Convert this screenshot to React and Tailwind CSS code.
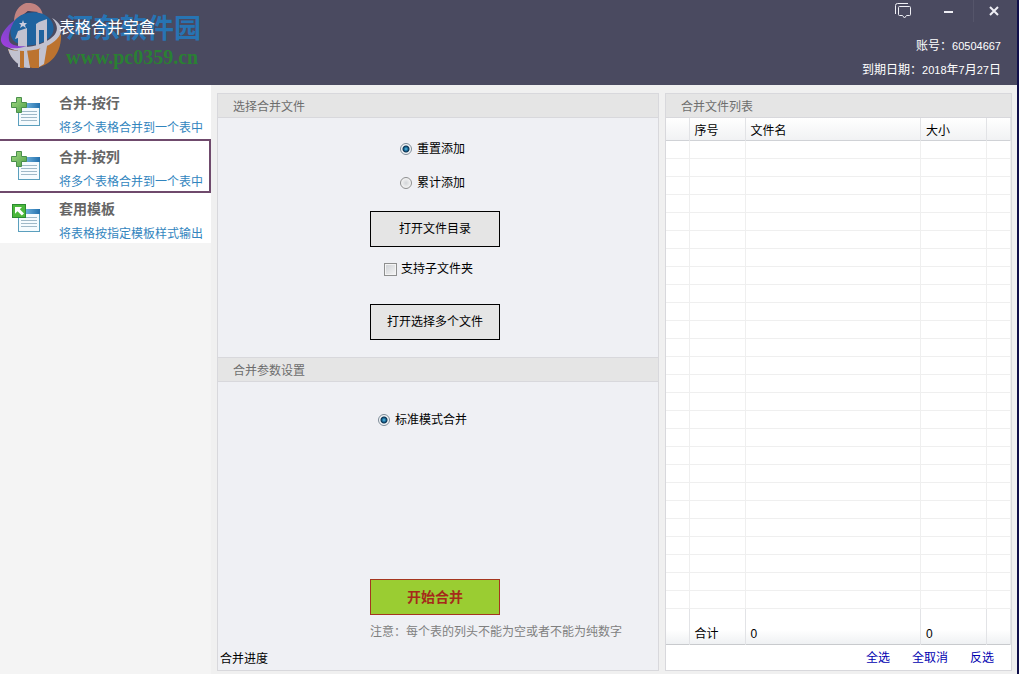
import { useState } from "react";
import { clsx } from "clsx";

const menuItems = [
  { id: "row", title: "合并-按行", description: "将多个表格合并到一个表中", icon: "plus" },
  { id: "column", title: "合并-按列", description: "将多个表格合并到一个表中", icon: "plus" },
  { id: "template", title: "套用模板", description: "将表格按指定模板样式输出", icon: "arrow" },
];

const emptyRows = Array.from({ length: 26 }, (_, index) => index);

const radioClass =
  "h-3 w-3 shrink-0 appearance-none rounded-full border border-[#8e8f8f] bg-[radial-gradient(circle,#d2d5d8_0,#f4f4f4_5px)] checked:border-[#7d8c98] checked:bg-[radial-gradient(circle_at_5px_5px,#5cc3e8_0,#14608f_2px,#0d3350_3px,#f4f6f8_4px)]";

function SheetIcon({ type }) {
  return (
    <svg className="h-[30px] w-[30px] shrink-0" viewBox="0 0 30 30" aria-hidden="true">
      <defs>
        <linearGradient id="sheet-bar" x1="0" x2="1">
          <stop offset="0" stopColor="#8fcdf0" />
          <stop offset="1" stopColor="#2370ad" />
        </linearGradient>
        <linearGradient id="sheet-green" x1="0" y1="0" x2="1" y2="1">
          <stop offset="0" stopColor="#a5dc82" />
          <stop offset="1" stopColor="#4f9f4a" />
        </linearGradient>
      </defs>
      <rect x="7.5" y="6.500" width="21" height="22" fill="#f5fbfe" stroke="#5b9fbd" />
      <rect x="8" y="6" width="21" height="5" fill="url(#sheet-bar)" />
      <path d="M10 14.500h16M10 17.500h16M10 20.500h16M10 23.500h16" stroke="#9fb9c8" />
      {type === "plus" ? (
        <path
          d="M5.500.500h5v5h5v5h-5v5h-5v-5h-5v-5h5z"
          fill="url(#sheet-green)"
          stroke="#4a8f4c"
        />
      ) : (
        <>
          <rect x="1.500" y="1.500" width="13" height="13" fill="#4bb83c" stroke="#2b8a30" />
          <path d="M4 4h7L8.800 6.200l4.200 4.200-2.200 2.200-4.300-4.300L4 10.800z" fill="#fff" />
        </>
      )}
    </svg>
  );
}

function SiteLogo() {
  return (
    <svg className="h-[66px] w-[62px]" viewBox="0 0 62 66" aria-hidden="true">
      <defs>
        <linearGradient id="swoosh" x1="0" y1="1" x2="1" y2="0">
          <stop offset="0" stopColor="#b03cf0" />
          <stop offset="1" stopColor="#5a4fc0" />
        </linearGradient>
      </defs>
      <path d="M14 19C14 9 19 2 26 0c9-1 16 4 17 13L28 8z" fill="#d08a84" />
      <path d="M17 17 28 8l10 1-8 5z" fill="#3a3a58" />
      <path d="M15 17c8-9 26-11 35-1 5 6 5 14-1 19-10 9-29 10-36 2-4-6-3-14 2-20z" fill="#1b66a6" />
      <path d="M61 31c1 18-10 33-28 34C20 64 11 57 8 46c20 5 40-1 53-15z" fill="#c9782a" />
      <path d="M8 46c5 2 11 2 17 1l5 18C19 64 11 57 8 46z" fill="#cfcfdd" />
      <path
        d="M18 64V35l-3 1 3-8 9-3v22l3 18zM39 64V47l5-7V27h-5V46l-3 1V21l3-2 8-3v27l-3 18z"
        fill="#cfcfdd"
      />
      <path d="M20 46h4v19h-4zM32 45h7v20h-7z" fill="#c9782a" />
      <path
        d="M52 15c14 8 11 19-3 27-14 7-33 8-41 2 14 1 27 0 37-5 12-6 16-14 7-24z"
        fill="#cfcfdd"
      />
      <path d="M15 17C5 24 0 33 1 38c2 8 14 9 26 5-10 1-17-1-18-6-1-6 2-13 6-20z" fill="url(#swoosh)" />
      <path d="m23 17 1 3h3l-2 2 1 3-3-2-3 2 1-3-2-2h3z" fill="#d9dcec" />
    </svg>
  );
}

function Header() {
  return (
    <header className="flex h-[85px] shrink-0 justify-between bg-[#4a4a60] text-white">
      <div className="relative">
        <div className="absolute left-0 top-[3px] flex opacity-90" aria-hidden="true">
          <SiteLogo />
          <div className="ml-1 mt-3 whitespace-nowrap">
            <p className="text-[27px] font-bold leading-7 text-[#2479bd]">河东软件园</p>
            <p className="mt-1 font-['Liberation_Serif',serif] text-xl font-bold leading-5 text-[#27862f]">
              www.pc0359.cn
            </p>
          </div>
        </div>
        <h1 className="relative pl-[59px] pt-4 text-base leading-6">表格合并宝盒</h1>
      </div>

      <div className="flex flex-col items-end">
        <div className="flex h-[22px]">
          <button type="button" className="grid w-11 place-items-center" aria-label="反馈">
            <svg width="16" height="16" viewBox="0 0 16 16" fill="none" stroke="#eeeef4" aria-hidden="true">
              <path d="M.500 11V2.500a2 2 0 0 1 2-2H13" />
              <path d="M4.500 3.500h10a1 1 0 0 1 1 1v7a1 1 0 0 1-1 1h-3L9.500 15l-2-2.500h-3a1 1 0 0 1-1-1v-7a1 1 0 0 1 1-1z" />
            </svg>
          </button>
          <button type="button" className="grid w-12 place-items-center" aria-label="最小化">
            <svg width="10" height="10" viewBox="0 0 10 10" aria-hidden="true">
              <path d="M0 6h9" stroke="#eeeef4" strokeWidth="2" />
            </svg>
          </button>
          <button
            type="button"
            className="grid w-11 place-items-center border-l border-[#55556a] pr-1"
            aria-label="关闭"
          >
            <svg width="10" height="10" viewBox="0 0 10 10" aria-hidden="true">
              <path d="m1 1 8 8M9 1 1 9" stroke="#eeeef4" strokeWidth="2" />
            </svg>
          </button>
        </div>
        <div className="mt-3 pr-4 text-right leading-6">
          <p>
            账号：<span className="text-[11px]">60504667</span>
          </p>
          <p>
            到期日期：<span className="text-[11px]">2018</span>年<span className="text-[11px]">7</span>月
            <span className="text-[11px]">27</span>日
          </p>
        </div>
      </div>
    </header>
  );
}

function Sidebar({ active, onSelect }) {
  return (
    <nav className="w-[211px] shrink-0 bg-[#f4f4f4]">
      {menuItems.map((item) => (
        <button
          key={item.id}
          type="button"
          onClick={() => onSelect(item.id)}
          className={clsx(
            "flex w-full items-center gap-[18px] border-y-2 border-r-2 bg-white pl-[11px] text-left",
            item.id === "template" ? "h-[50px]" : "h-[54px]",
            active === item.id ? "border-[#6f4a6c]" : "border-white",
          )}
        >
          <SheetIcon type={item.icon} />
          <span className="whitespace-nowrap pt-[6px]">
            <span className="block text-sm font-bold leading-6 text-[#666]">{item.title}</span>
            <span className="mt-px block leading-6 text-[#3285be]">{item.description}</span>
          </span>
        </button>
      ))}
    </nav>
  );
}

function SectionTitle({ children }) {
  return (
    <h2 className="h-6 shrink-0 border-b border-[#d8d8dc] bg-[#e5e5e5] pl-[15px] leading-[26px] text-[#6d6d6d]">
      {children}
    </h2>
  );
}

function MergePanel() {
  const [addMode, setAddMode] = useState("reset");
  const [subFolders, setSubFolders] = useState(false);

  return (
    <section className="flex flex-col border border-[#d8d8dc] bg-[#eff0f4]">
      <SectionTitle>选择合并文件</SectionTitle>
      <div className="mx-auto w-[136px] whitespace-nowrap pb-[17px] pt-[22px]">
        <label className="ml-[30px] flex h-[18px] items-center gap-[5px]">
          <input
            type="radio"
            name="addMode"
            className={radioClass}
            checked={addMode === "reset"}
            onChange={() => setAddMode("reset")}
          />
          重置添加
        </label>
        <label className="ml-[30px] mt-4 flex h-[18px] items-center gap-[5px]">
          <input
            type="radio"
            name="addMode"
            className={radioClass}
            checked={addMode === "append"}
            onChange={() => setAddMode("append")}
          />
          累计添加
        </label>
        <button type="button" className="mt-[19px] h-9 w-[130px] border border-black bg-[#e5e5e5]">
          打开文件目录
        </button>
        <label className="ml-[14px] mt-[13px] flex h-[18px] items-center gap-1">
          <input
            type="checkbox"
            className="h-[13px] w-[13px] shrink-0 appearance-none border border-[#8e8f8f] bg-linear-to-br from-[#cdd0d4] to-[#f6f6f6] shadow-[inset_0_0_0_1px_#f4f4f4] checked:from-[#14608f] checked:to-[#14608f]"
            checked={subFolders}
            onChange={(event) => setSubFolders(event.target.checked)}
          />
          支持子文件夹
        </label>
        <button type="button" className="mt-[26px] h-9 w-[130px] border border-black bg-[#e5e5e5]">
          打开选择多个文件
        </button>
      </div>

      <div className="border-t border-[#d8d8dc]">
        <SectionTitle>合并参数设置</SectionTitle>
      </div>
      <div className="mx-auto flex w-[136px] flex-1 flex-col whitespace-nowrap pt-[29px]">
        <label className="ml-2 flex h-[18px] items-center gap-[5px]">
          <input type="radio" name="mergeMode" className={radioClass} defaultChecked />
          标准模式合并
        </label>
        <button
          type="button"
          className="mt-auto h-9 w-[130px] border border-[#a5361f] bg-[#9acd32] text-sm font-bold text-[#a52a1a]"
        >
          开始合并
        </button>
        <p className="mt-[9px] leading-4 text-[#808080]">注意：每个表的列头不能为空或者不能为纯数字</p>
      </div>
      <p className="mt-[9px] pb-px pl-[2px] leading-5">合并进度</p>
    </section>
  );
}

function FileListPanel() {
  return (
    <section className="flex flex-col border border-[#d8d8dc] bg-white">
      <SectionTitle>合并文件列表</SectionTitle>
      <table className="w-full table-fixed border-collapse text-left">
        <colgroup>
          <col className="w-[23px]" />
          <col className="w-14" />
          <col />
          <col className="w-[66px]" />
          <col className="w-6" />
        </colgroup>
        <thead className="bg-linear-to-b from-white to-[#f1f2f4]">
          <tr className="h-[22px] border-b border-[#d0d2d6] *:border-r *:border-[#e2e3e6] *:pl-[5px] *:pt-1 *:font-normal *:leading-4">
            <th />
            <th>序号</th>
            <th>文件名</th>
            <th>大小</th>
            <th className="border-r-0" />
          </tr>
        </thead>
        <tbody>
          {emptyRows.map((row) => (
            <tr key={row} className="h-[18px] border-b border-[#efefef] *:border-r *:border-[#efefef]">
              <td />
              <td />
              <td />
              <td />
              <td className="border-r-0" />
            </tr>
          ))}
        </tbody>
        <tfoot className="bg-linear-to-b from-white from-60% to-[#eff1f3]">
          <tr className="h-9 border-b border-[#c8cacd] *:border-r *:border-[#e2e3e6] *:pl-[5px] *:pt-[15px] *:font-normal *:leading-5">
            <td />
            <th scope="row">合计</th>
            <td>0</td>
            <td>0</td>
            <td className="border-r-0" />
          </tr>
        </tfoot>
      </table>
      <div className="flex flex-1 items-center justify-end gap-[22px] pr-[17px] pt-0.5 text-[#0000b0]">
        <a href="#all">全选</a>
        <a href="#none">全取消</a>
        <a href="#invert">反选</a>
      </div>
    </section>
  );
}

export default function App() {
  const [active, setActive] = useState("column");

  return (
    <div className="flex min-h-screen flex-col border-r-2 border-[#10104a] bg-[#f0f0f0] font-['Liberation_Sans','Noto_Sans_CJK_SC',sans-serif] text-xs text-black">
      <Header />
      <div className="flex flex-1">
        <Sidebar active={active} onSelect={setActive} />
        <main className="grid flex-1 grid-cols-[442fr_347fr] gap-[6px] pb-[3px] pl-[6px] pr-[5px] pt-2">
          <MergePanel />
          <FileListPanel />
        </main>
      </div>
    </div>
  );
}
